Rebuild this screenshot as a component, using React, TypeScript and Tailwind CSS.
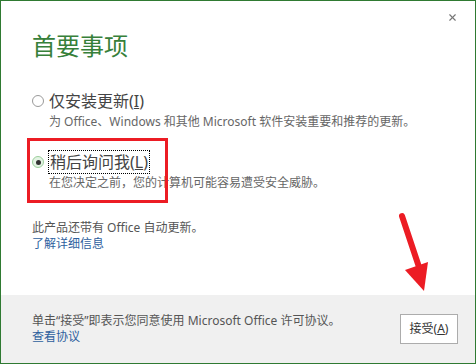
import { X } from "lucide-react";

const font = {
  fontFamily: '"Noto Sans", "Noto Sans CJK SC", sans-serif',
};

function Radio({ checked }: { checked?: boolean }) {
  if (checked) {
    return (
      <span className="flex h-[12px] w-[12px] shrink-0 items-center justify-center rounded-full border border-[#9ccf9c] bg-[#e3f3e3]">
        <span className="h-[5px] w-[5px] rounded-full bg-[#333]" />
      </span>
    );
  }
  return <span className="h-[12px] w-[12px] shrink-0 rounded-full border border-[#9a9a9a] bg-white" />;
}

export default function App() {
  return (
    <div
      className="relative flex h-[364px] w-[476px] flex-col border border-[#2f7a32] bg-white"
      style={font}
    >
      {/* main panel */}
      <div className="relative flex-1 pl-[31px] pt-[29px]">
        <button className="absolute right-[17px] top-[11px] text-[#777]">
          <X className="h-[11px] w-[11px]" strokeWidth={2.5} />
        </button>

        <h1 className="text-[24px] leading-[32px] font-normal text-[#37803a]">首要事项</h1>

        <div className="mt-[28px]">
          <div className="flex items-center gap-[5px]">
            <Radio />
            <span className="text-[16px] leading-[22px] text-[#444]">
              仅安装更新(<span className="underline">I</span>)
            </span>
          </div>
          <p className="mt-[2px] pl-[17px] text-[12px] leading-[16px] text-[#666]">
            为 Office、Windows 和其他 Microsoft 软件安装重要和推荐的更新。
          </p>
        </div>

        <div className="mt-[20px]">
          <div className="flex items-center gap-[4px]">
            <Radio checked />
            <span className="border border-dotted border-black px-[1px] text-[16px] leading-[22px] text-[#444]">
              稍后询问我(<span className="underline">L</span>)
            </span>
          </div>
          <p className="mt-[1px] pl-[17px] text-[12px] leading-[16px] text-[#666]">
            在您决定之前，您的计算机可能容易遭受安全威胁。
          </p>
        </div>

        <div className="mt-[29px] text-[12px] leading-[16px]">
          <p className="text-[#555]">此产品还带有 Office 自动更新。</p>
          <a className="text-[#2e5f9e]">了解详细信息</a>
        </div>
      </div>

      {/* footer */}
      <div className="flex h-[68px] items-center justify-between bg-[#f0f0f0] pl-[31px] pr-[17px]">
        <div className="text-[12px] leading-[16px]">
          <p className="text-[#555]">单击“接受”即表示您同意使用 Microsoft Office 许可协议。</p>
          <a className="text-[#2e5f9e]">查看协议</a>
        </div>
        <button className="h-[30px] w-[58px] border border-[#acacac] bg-white text-[12px] text-[#333]">
          接受(<span className="underline">A</span>)
        </button>
      </div>

      {/* annotations */}
      <div className="absolute left-[26px] top-[137px] h-[65px] w-[141px] border-[3px] border-[#ec1c24]" />
      <svg className="absolute left-[390px] top-[208px]" width="50" height="90" viewBox="0 0 50 90">
        <line x1="11" y1="7" x2="30" y2="64" stroke="#ec1c24" strokeWidth="6" strokeLinecap="round" />
        <polygon points="14,61 37,53 33,82" fill="#ec1c24" />
      </svg>
    </div>
  );
}
